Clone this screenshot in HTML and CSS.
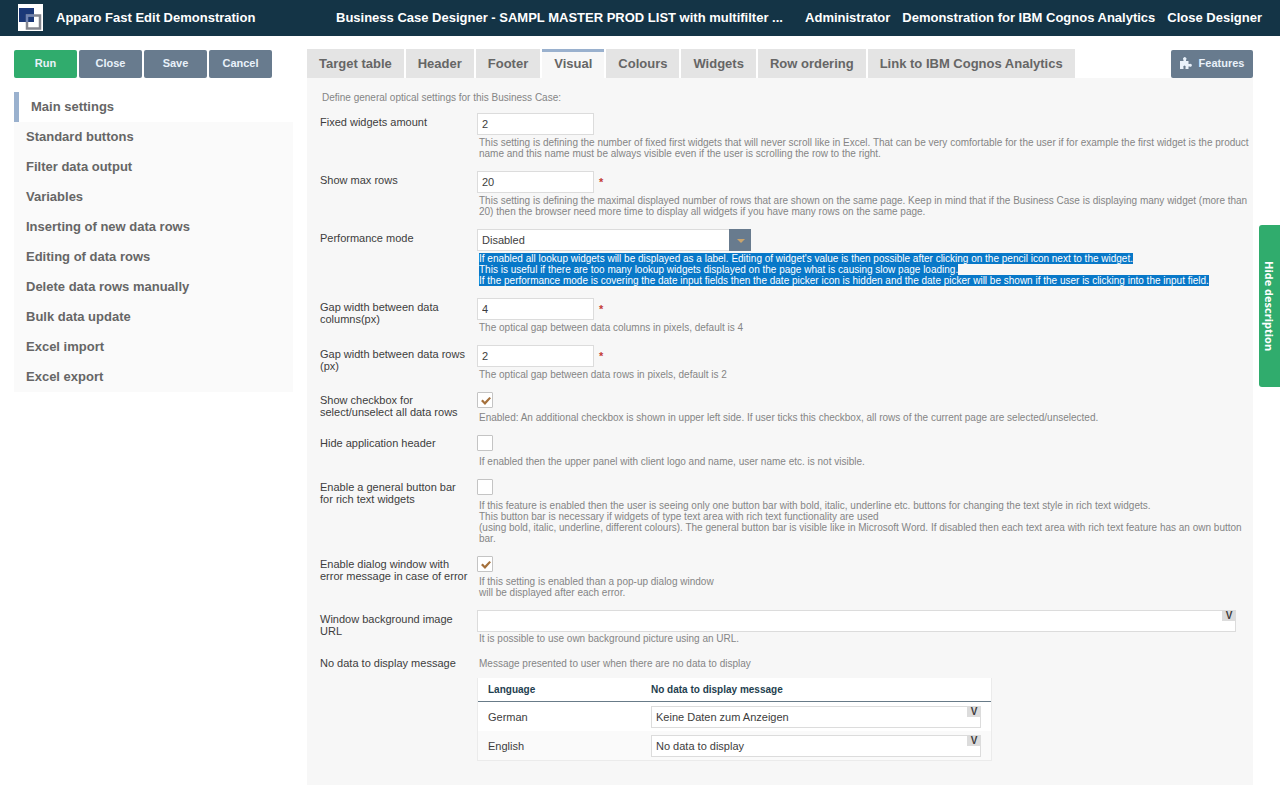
FILE: index.html
```
<!DOCTYPE html>
<html lang="en">
<head>
    <meta charset="UTF-8">
    <meta name="viewport" content="width=device-width, initial-scale=1.0">
    <title>Apparo Fast Edit - Business Case Designer</title>
    <link rel="stylesheet" href="styles.css">
</head>
<body>

<header class="topbar">
    <div class="brand">
        <svg class="logo" viewBox="0 0 25 27" aria-hidden="true">
            <rect width="25" height="27" fill="#fff"/>
            <rect x="1" y="4" width="15" height="14" fill="#1b3878"/>
            <rect x="9" y="11.500" width="13" height="13" fill="none" stroke="#84868f" stroke-width="2.500"/>
            <path d="M9 18V11.500H16" fill="none" stroke="#6f83b5" stroke-width="2"/>
        </svg>
        <span>Apparo Fast Edit Demonstration</span>
    </div>
    <div class="case-title">Business Case Designer - SAMPL MASTER PROD LIST with multifilter ...</div>
    <nav class="user-nav">
        <span>Administrator</span>
        <span>Demonstration for IBM Cognos Analytics</span>
        <a href="#">Close Designer</a>
    </nav>
</header>

<div class="layout">
    <aside class="sidebar">
        <div class="actions">
            <button type="button" class="btn btn-run">Run</button>
            <button type="button" class="btn">Close</button>
            <button type="button" class="btn">Save</button>
            <button type="button" class="btn">Cancel</button>
        </div>
        <nav class="menu">
            <a href="#" class="active">Main settings</a>
            <a href="#">Standard buttons</a>
            <a href="#">Filter data output</a>
            <a href="#">Variables</a>
            <a href="#">Inserting of new data rows</a>
            <a href="#">Editing of data rows</a>
            <a href="#">Delete data rows manually</a>
            <a href="#">Bulk data update</a>
            <a href="#">Excel import</a>
            <a href="#">Excel export</a>
        </nav>
    </aside>

    <main class="content">
        <div class="tab-row">
            <nav class="tabs">
                <a href="#">Target table</a>
                <a href="#">Header</a>
                <a href="#">Footer</a>
                <a href="#" class="active">Visual</a>
                <a href="#">Colours</a>
                <a href="#">Widgets</a>
                <a href="#">Row ordering</a>
                <a href="#">Link to IBM Cognos Analytics</a>
            </nav>
            <button type="button" class="btn btn-features">
                <svg viewBox="0 0 12 12" aria-hidden="true">
                    <path d="M0 4H3.500V3A1.700 1.700 0 1 1 6 3V4H8.500V7H9.500A1.500 1.500 0 1 1 9.500 9.500H8.500V12H5.500V10.500A1.200 1.200 0 1 0 3.500 10.500V12H0Z" fill="#e9f1fa"/>
                </svg>
                Features
            </button>
        </div>

        <form class="panel">
            <p class="intro">Define general optical settings for this Business Case:</p>

            <div class="row">
                <label for="fixed">Fixed widgets amount</label>
                <div>
                    <input type="text" id="fixed" class="short" value="2">
                    <p class="help">This setting is defining the number of fixed first widgets that will never scroll like in Excel. That can be very comfortable for the user if for example the first widget is the product name and this name must be always visible even if the user is scrolling the row to the right.</p>
                </div>
            </div>

            <div class="row">
                <label for="maxrows">Show max rows</label>
                <div>
                    <div class="field"><input type="text" id="maxrows" class="short" value="20"><span class="required">*</span></div>
                    <p class="help">This setting is defining the maximal displayed number of rows that are shown on the same page. Keep in mind that if the Business Case is displaying many widget (more than 20) then the browser need more time to display all widgets if you have many rows on the same page.</p>
                </div>
            </div>

            <div class="row">
                <label for="performance">Performance mode</label>
                <div>
                    <div class="select">
                        <select id="performance">
                            <option>Disabled</option>
                            <option>Enabled</option>
                        </select>
                    </div>
                    <p class="help"><mark>If enabled all lookup widgets will be displayed as a label. Editing of widget's value is then possible after clicking on the pencil icon next to the widget.</mark><br>
                    <mark>This is useful if there are too many lookup widgets displayed on the page what is causing slow page loading.</mark><br>
                    <mark>If the performance mode is covering the date input fields then the date picker icon is hidden and the date picker will be shown if the user is clicking into the input field.</mark></p>
                </div>
            </div>

            <div class="row">
                <label for="gapcols">Gap width between data columns(px)</label>
                <div>
                    <div class="field"><input type="text" id="gapcols" class="short" value="4"><span class="required">*</span></div>
                    <p class="help">The optical gap between data columns in pixels, default is 4</p>
                </div>
            </div>

            <div class="row">
                <label for="gaprows">Gap width between data rows (px)</label>
                <div>
                    <div class="field"><input type="text" id="gaprows" class="short" value="2"><span class="required">*</span></div>
                    <p class="help">The optical gap between data rows in pixels, default is 2</p>
                </div>
            </div>

            <div class="row check-row">
                <label for="selectall">Show checkbox for select/unselect all data rows</label>
                <div>
                    <input type="checkbox" id="selectall" checked>
                    <p class="help">Enabled: An additional checkbox is shown in upper left side. If user ticks this checkbox, all rows of the current page are selected/unselected.</p>
                </div>
            </div>

            <div class="row check-row spaced">
                <label for="hideheader">Hide application header</label>
                <div>
                    <input type="checkbox" id="hideheader">
                    <p class="help">If enabled then the upper panel with client logo and name, user name etc. is not visible.</p>
                </div>
            </div>

            <div class="row check-row spaced">
                <label for="buttonbar">Enable a general button bar for rich text widgets</label>
                <div>
                    <input type="checkbox" id="buttonbar">
                    <p class="help">If this feature is enabled then the user is seeing only one button bar with bold, italic, underline etc. buttons for changing the text style in rich text widgets.<br>
                    This button bar is necessary if widgets of type text area with rich text functionality are used<br>
                    (using bold, italic, underline, different colours). The general button bar is visible like in Microsoft Word. If disabled then each text area with rich text feature has an own button bar.</p>
                </div>
            </div>

            <div class="row check-row">
                <label for="errordialog">Enable dialog window with error message in case of error</label>
                <div>
                    <input type="checkbox" id="errordialog" checked>
                    <p class="help">If this setting is enabled than a pop-up dialog window<br>will be displayed after each error.</p>
                </div>
            </div>

            <div class="row url-row">
                <label for="bgurl">Window background image URL</label>
                <div>
                    <div class="variable-field">
                        <input type="text" id="bgurl">
                        <button type="button" aria-label="Insert variable">V</button>
                    </div>
                    <p class="help">It is possible to use own background picture using an URL.</p>
                </div>
            </div>

            <div class="row message-row">
                <div class="label">No data to display message</div>
                <div>
                    <p class="help">Message presented to user when there are no data to display</p>
                    <table class="messages">
                        <thead>
                            <tr>
                                <th>Language</th>
                                <th>No data to display message</th>
                            </tr>
                        </thead>
                        <tbody>
                            <tr>
                                <td><label for="msg-de">German</label></td>
                                <td>
                                    <div class="variable-field">
                                        <input type="text" id="msg-de" value="Keine Daten zum Anzeigen">
                                        <button type="button" aria-label="Insert variable">V</button>
                                    </div>
                                </td>
                            </tr>
                            <tr>
                                <td><label for="msg-en">English</label></td>
                                <td>
                                    <div class="variable-field">
                                        <input type="text" id="msg-en" value="No data to display">
                                        <button type="button" aria-label="Insert variable">V</button>
                                    </div>
                                </td>
                            </tr>
                        </tbody>
                    </table>
                </div>
            </div>
        </form>
    </main>
</div>

<button type="button" class="hide-description">Hide description</button>

</body>
</html>
```
FILE: styles.css
```
* {
    box-sizing: border-box;
}

body {
    font-family: "Liberation Sans", Arial, sans-serif;
    font-size: 11px;
    color: #3d3d3d;
    background-color: #fff;
    margin: 0;
}

a {
    color: inherit;
    text-decoration: none;
}

p {
    margin: 0;
}

input,
select,
button {
    font-family: inherit;
    font-size: 11px;
    color: inherit;
    margin: 0;
}

/* Top bar */
.topbar {
    display: grid;
    grid-template-columns: 318px 1fr auto;
    align-items: center;
    height: 36px;
    padding: 0 18px 1px;
    background-color: #143446;
    color: #fff;
    font-size: 13px;
    font-weight: bold;
    white-space: nowrap;
}

.brand {
    display: flex;
    align-items: center;
    gap: 13px;
}

.logo {
    width: 25px;
    height: 27px;
}

.user-nav {
    display: flex;
    gap: 12px;
}

/* Page columns */
.layout {
    display: grid;
    grid-template-columns: 279px 1fr;
    gap: 14px;
    padding: 13px 27px 15px 14px;
}

.actions {
    display: flex;
    gap: 2px;
    margin: 1px 0 14px;
}

.btn {
    width: 63px;
    height: 28px;
    padding: 0 0 2px;
    border: 0;
    border-radius: 2px;
    background-color: #687b8e;
    color: #e9f1fa;
    font-weight: bold;
    cursor: pointer;
}

.btn-run {
    background-color: #30ac6d;
}

.menu {
    background-color: #fafafa;
    color: #666;
    font-size: 13px;
    font-weight: bold;
}

.menu a {
    display: block;
    padding: 0 12px;
    line-height: 30px;
}

.menu .active {
    border-left: 5px solid #9ab1ce;
    background-color: #fff;
}

/* Tabs */
.tab-row {
    display: flex;
    justify-content: space-between;
    align-items: flex-end;
}

.tabs {
    display: flex;
    gap: 2px;
}

.tabs a {
    height: 29px;
    padding: 0 12px;
    background-color: #e4e4e4;
    color: #666;
    font-size: 13px;
    font-weight: bold;
    line-height: 29px;
}

.tabs .active {
    border-top: 3px solid #9ab1ce;
    background-color: #f7f7f7;
    line-height: 23px;
}

.btn-features {
    display: flex;
    align-items: center;
    justify-content: center;
    gap: 7px;
    width: 82px;
}

.btn-features svg {
    width: 12px;
    height: 12px;
}

/* Settings form */
.panel {
    padding: 14px 17px 24px 13px;
    background-color: #f7f7f7;
}

.intro {
    margin: 0 0 9px 2px;
    color: #858585;
    font-size: 10px;
    line-height: 12px;
}

.row {
    display: grid;
    grid-template-columns: 149px 1fr;
    column-gap: 8px;
    margin-bottom: 12px;
    line-height: 12px;
}

.row > label,
.row > .label {
    padding-top: 3px;
}

.row > div {
    min-width: 0;
}

/* descriptions may run into the panel padding */
.help {
    margin: 2px -16px 0 2px;
    color: #858585;
    font-size: 10px;
    line-height: 11px;
}

.check-row > label {
    padding-top: 2px;
}

.check-row .help {
    margin-top: 4px;
}

.spaced .help {
    margin-top: 5px;
}

.url-row .help {
    margin-top: 1px;
}

.help mark {
    background-color: #0878c8;
    color: #fff;
}

input[type="text"] {
    display: block;
    width: 100%;
    height: 22px;
    padding: 0 4px;
    border: 1px solid #dcdcdc;
    background-color: #fff;
}

input.short {
    width: 117px;
}

.field {
    display: flex;
    gap: 5px;
}

.required {
    color: #c43c35;
    font-weight: bold;
    line-height: 22px;
}

.select {
    position: relative;
    width: 274px;
    height: 22px;
}

.select select {
    appearance: none;
    width: 100%;
    height: 22px;
    padding: 0 26px 0 4px;
    border: 1px solid #dcdcdc;
    border-right: 0;
    border-radius: 0;
    background-color: #fff;
}

.select::before {
    content: "";
    position: absolute;
    top: 0;
    right: 0;
    width: 22px;
    height: 22px;
    background-color: #687b8e;
    pointer-events: none;
}

.select::after {
    content: "";
    position: absolute;
    top: 10px;
    right: 6px;
    border: 4px solid transparent;
    border-top-color: #c9a46c;
    border-bottom: 0;
    pointer-events: none;
}

input[type="checkbox"] {
    appearance: none;
    display: block;
    width: 16px;
    height: 16px;
    border: 1px solid #c4c4c4;
    border-radius: 1px;
    background-color: #fff;
}

input[type="checkbox"]:checked::before {
    content: "";
    display: block;
    width: 10px;
    height: 8px;
    margin: 4px 3px;
    background-color: #a5713c;
    clip-path: polygon(0 50%, 18% 32%, 38% 58%, 84% 0, 100% 16%, 40% 100%);
}

/* Text field with the variable button in its corner */
.variable-field {
    position: relative;
}

.variable-field button {
    position: absolute;
    top: 0;
    right: 0;
    width: 14px;
    height: 11px;
    padding: 0;
    border: 0;
    background-color: #dcdcdc;
    font-size: 10px;
    font-weight: bold;
    line-height: 12px;
}

.message-row {
    margin-bottom: 0;
}

.row > .label {
    padding-top: 1px;
}

.messages {
    width: 515px;
    margin-top: 9px;
    border: 1px solid #ebebeb;
    border-top: 0;
    border-collapse: separate;
    border-spacing: 0;
    background-color: #fff;
    table-layout: fixed;
}

.messages th {
    height: 24px;
    padding: 0 10px;
    border-bottom: 1px solid #687b88;
    color: #1f3f50;
    font-size: 10px;
    text-align: left;
}

.messages th:first-child {
    width: 163px;
}

.messages td {
    height: 29px;
    padding: 0 10px;
}

.messages tbody tr:last-child {
    background-color: #fafafa;
}

/* Side handle */
.hide-description {
    position: fixed;
    top: 225px;
    right: 0;
    width: 21px;
    height: 162px;
    padding: 0;
    border: 0;
    border-radius: 3px 0 0 3px;
    background-color: #30ac6d;
    color: #fff;
    font-family: "Open Sans", sans-serif;
    font-weight: bold;
    writing-mode: vertical-rl;
}
```
